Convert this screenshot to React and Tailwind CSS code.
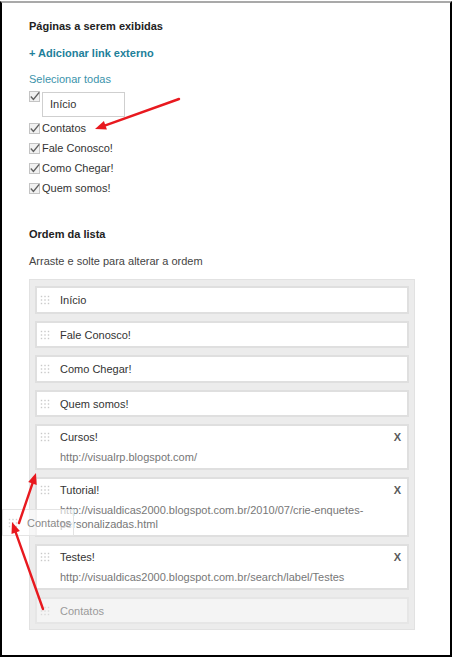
import React from "react";

function Check() {
  return (
    <svg width="11" height="11" viewBox="0 0 11 11" className="shrink-0">
      <rect x="0.5" y="0.5" width="10" height="10" fill="#f1f1f1" stroke="#c4c4c4" />
      <path d="M1.8 5.6 L4.4 8.4 L10.2 1.4" fill="none" stroke="#606060" strokeWidth="1.4" />
    </svg>
  );
}

function Dots({ color = "#c9c9c9" }) {
  return (
    <svg width="10" height="10" viewBox="0 0 10 10" className="shrink-0">
      {[1.5, 5, 8.5].map((x) =>
        [1.5, 5, 8.5].map((y) => (
          <rect key={x + "-" + y} x={x - 0.7} y={y - 0.7} width="1.4" height="1.4" fill={color} />
        ))
      )}
    </svg>
  );
}

function SimpleItem({ label, h }) {
  return (
    <div className={`${h} border-2 border-[#dfdfdf] bg-white flex items-center pl-[3px]`}>
      <Dots />
      <span className="ml-[10px] text-[#333] leading-[14px]">{label}</span>
    </div>
  );
}

function LinkItem({ label, lines }) {
  return (
    <div className="border-2 border-[#dfdfdf] bg-white flex items-start pl-[3px] pr-[4px] pt-[4px] pb-[4px]">
      <div className="h-[14px] flex items-center">
        <Dots />
      </div>
      <div className="ml-[10px] flex-1 flex flex-col">
        <span className="text-[#333] leading-[14px]">{label}</span>
        <span className="mt-[6px] text-[#777] leading-[14px]">
          {lines.map((l, i) => (
            <React.Fragment key={i}>
              {i > 0 && <br />}
              {l}
            </React.Fragment>
          ))}
        </span>
      </div>
      <span className="leading-[14px] font-bold text-[#5a5a5a] pr-[2px]">X</span>
    </div>
  );
}

function Arrow({ line, head }) {
  return (
    <g>
      <line x1={line[0]} y1={line[1]} x2={line[2]} y2={line[3]} stroke="#e8191f" strokeWidth="2.4" strokeLinecap="round" />
      <polygon points={head} fill="#e8191f" />
    </g>
  );
}

export default function App() {
  return (
    <div className="relative w-[452px] h-[657px] bg-white overflow-hidden pt-px font-['Liberation_Sans',Arial,sans-serif] text-[11px]">
      <div className="h-[656px] border-t-2 border-t-[#a9a9a9] border-x-2 border-b-2 border-x-black border-b-black pl-[27px] pt-[16px] flex flex-col items-start">
        <div className="h-[14px] leading-[14px] font-bold text-[#222]">Páginas a serem exibidas</div>
        <div className="mt-[13px] h-[14px] leading-[14px] font-bold text-[#21809a]">+ Adicionar link externo</div>
        <div className="mt-[12px] h-[14px] leading-[14px] text-[#3b93ab]">Selecionar todas</div>
        <div className="mt-[5px] flex items-start">
          <Check />
          <div className="ml-[2px] mt-px w-[83px] h-[25px] border border-[#cfcfcf] bg-white flex items-center pl-[7px] text-[#333]">
            Início
          </div>
        </div>
        <div className="mt-[1px] flex flex-col">
          {["Contatos", "Fale Conosco!", "Como Chegar!", "Quem somos!"].map((t) => (
            <div key={t} className="h-[20px] flex items-center">
              <Check />
              <span className="ml-[2px] text-[#333] leading-[14px]">{t}</span>
            </div>
          ))}
        </div>
        <div className="mt-[29px] h-[14px] leading-[14px] font-bold text-[#222]">Ordem da lista</div>
        <div className="mt-[13px] h-[14px] leading-[14px] text-[#444]">Arraste e solte para alterar a ordem</div>
        <div className="mt-[11px] w-[386px] bg-[#ececec] border border-[#e2e2e2] pl-[5px] pr-[5px] pt-[6px] pb-[5px] flex flex-col gap-[7px]">
          <SimpleItem label="Início" h="h-[28px]" />
          <SimpleItem label="Fale Conosco!" h="h-[27px]" />
          <SimpleItem label="Como Chegar!" h="h-[28px]" />
          <SimpleItem label="Quem somos!" h="h-[27px]" />
          <LinkItem label="Cursos!" lines={["http://visualrp.blogspot.com/"]} />
          <LinkItem
            label="Tutorial!"
            lines={["http://visualdicas2000.blogspot.com.br/2010/07/crie-enquetes-", "personalizadas.html"]}
          />
          <LinkItem label="Testes!" lines={["http://visualdicas2000.blogspot.com.br/search/label/Testes"]} />
          <div className="h-[27px] border-2 border-[#e6e6e6] bg-[#f4f4f4] flex items-center pl-[3px]">
            <Dots color="#dadada" />
            <span className="ml-[10px] text-[#9a9a9a] leading-[14px]">Contatos</span>
          </div>
        </div>
      </div>

      <div className="absolute left-[2px] top-[509px] w-[72px] h-[27px] bg-white/60 border border-[#e4e4e4] flex items-center pl-[5px]">
        <Dots color="#d2d2d2" />
        <span className="ml-[9px] text-[#8a8a8a] leading-[14px]">Contatos</span>
      </div>

      <svg className="absolute inset-0 pointer-events-none" width="452" height="657" viewBox="0 0 452 657">
        <Arrow line={[179, 99, 105.4, 125.3]} head="95,129 106.9,129.5 103.9,121.1" />
        <Arrow line={[19, 523, 32.5, 483.4]} head="36,473 36.7,484.9 28.2,482" />
        <Arrow line={[43, 609, 15.7, 532.4]} head="12,522 19.9,530.9 11.5,533.9" />
      </svg>
    </div>
  );
}
